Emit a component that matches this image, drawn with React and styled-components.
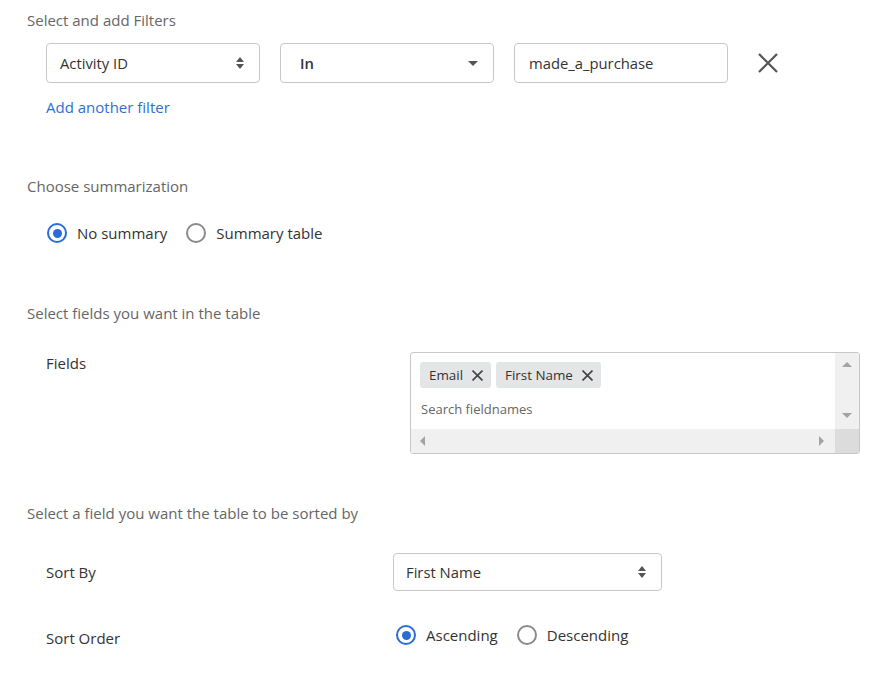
import React from "react";
import styled, { createGlobalStyle } from "styled-components";

const Global = createGlobalStyle`
  html, body { margin: 0; padding: 0; background: #fff; }
  body { font-family: "Open Sans", "Noto Sans", sans-serif; color: #333; }
  * { box-sizing: border-box; }
`;

const Page = styled.div`
  width: 876px;
  height: 673px;
  padding: 10px 0 0 27px;
  overflow: hidden;
`;

const Heading = styled.div`
  font-size: 15px;
  line-height: 20px;
  color: #666;
  margin-top: ${(p) => p.$mt || 0}px;
`;

const Indent = styled.div`
  padding-left: 19px;
  margin-top: ${(p) => p.$mt || 0}px;
`;

const FilterRow = styled.div`
  display: flex;
  align-items: center;
  gap: 20px;
`;

const Box = styled.div`
  width: ${(p) => p.$w || 214}px;
  height: ${(p) => p.$h || 40}px;
  border: 1px solid #c8c8c8;
  border-radius: 4px;
  display: flex;
  align-items: center;
  padding-left: ${(p) => p.$pl || 14}px;
  padding-right: 15px;
  font-size: 14.8px;
  font-weight: ${(p) => (p.$bold ? 600 : 400)};
  color: #333;
  background: #fff;
`;

const BoxText = styled.span`
  flex: 1;
`;

const CloseButton = styled.button`
  border: 0;
  background: none;
  padding: 0;
  margin-left: 9px;
  width: 22px;
  height: 22px;
  display: flex;
  align-items: center;
  justify-content: center;
  cursor: pointer;
`;

const Link = styled.a`
  display: block;
  color: #2f6fd3;
  font-size: 15px;
  line-height: 20px;
  text-decoration: none;
  margin-top: 14px;
`;

const RadioGroup = styled.div`
  display: flex;
  align-items: center;
  height: 20px;
  margin-left: ${(p) => p.$ml || 0}px;
`;

const RadioItem = styled.label`
  display: flex;
  align-items: center;
  font-size: 15px;
  color: #333;
  margin-right: 18px;
`;

const RadioCircle = styled.span`
  width: 20px;
  height: 20px;
  border-radius: 50%;
  border: 2px solid ${(p) => (p.$checked ? "#2b6cd4" : "#8a8a8a")};
  display: flex;
  align-items: center;
  justify-content: center;
  margin: 0 10px 0 1px;
  &::after {
    content: "";
    width: 9px;
    height: 9px;
    border-radius: 50%;
    background: ${(p) => (p.$checked ? "#2b6cd4" : "transparent")};
  }
`;

const FieldRow = styled.div`
  display: flex;
  align-items: ${(p) => p.$align || "flex-start"};
  margin-top: ${(p) => p.$mt || 0}px;
`;

const Label = styled.div`
  width: ${(p) => p.$w}px;
  font-size: 15px;
  line-height: 20px;
  color: #333;
  padding-top: ${(p) => p.$pt || 0}px;
  flex-shrink: 0;
`;

const MultiBox = styled.div`
  width: 450px;
  height: 102px;
  border: 1px solid #c8c8c8;
  border-radius: 3px;
  display: grid;
  grid-template-columns: 1fr 24px;
  grid-template-rows: 1fr 24px;
  overflow: hidden;
`;

const MultiContent = styled.div`
  padding: 9px 0 0 9px;
`;

const Tags = styled.div`
  display: flex;
  gap: 5px;
`;

const Tag = styled.span`
  display: inline-flex;
  align-items: center;
  height: 26px;
  padding: 0 8px 0 9px;
  background: #e4e5e7;
  border-radius: 3px;
  font-size: 13.4px;
  color: #333;
  gap: 9px;
`;

const Search = styled.div`
  font-size: 13px;
  color: #666;
  margin-top: 12px;
  padding-left: 1px;
`;

const VScroll = styled.div`
  background: #f0f0f0;
  display: flex;
  flex-direction: column;
  justify-content: space-between;
  align-items: center;
  padding: 9px 0 11px;
`;

const HScroll = styled.div`
  background: #f0f0f0;
  display: flex;
  justify-content: space-between;
  align-items: center;
  padding: 0 11px 0 9px;
`;

const Corner = styled.div`
  background: #dcdcdc;
`;

const Tri = ({ dir }) => {
  const pts = {
    up: "0,5 5,0 10,5",
    down: "0,0 10,0 5,5",
    left: "5,0 5,10 0,5",
    right: "0,0 5,5 0,10",
  }[dir];
  const w = dir === "up" || dir === "down" ? 10 : 5;
  const h = dir === "up" || dir === "down" ? 5 : 10;
  return (
    <svg width={w} height={h} viewBox={`0 0 ${w} ${h}`}>
      <polygon points={pts} fill="#a3a3a3" />
    </svg>
  );
};

const UpDown = () => (
  <svg width="8" height="12" viewBox="0 0 8 12">
    <polygon points="0,5 4,0 8,5" fill="#555" />
    <polygon points="0,7 8,7 4,12" fill="#555" />
  </svg>
);

const Caret = () => (
  <svg width="10" height="5" viewBox="0 0 10 5">
    <polygon points="0,0 10,0 5,5" fill="#555" />
  </svg>
);

const XIcon = ({ size = 20, sw = 2, color = "#555" }) => (
  <svg width={size} height={size} viewBox="0 0 20 20">
    <path d="M1 1 L19 19 M19 1 L1 19" stroke={color} strokeWidth={sw} fill="none" />
  </svg>
);

const Radio = ({ checked, children }) => (
  <RadioItem>
    <RadioCircle $checked={checked} />
    {children}
  </RadioItem>
);

export default function App() {
  return (
    <>
      <Global />
      <Page>
        <Heading>Select and add Filters</Heading>
        <Indent $mt={13}>
          <FilterRow>
            <Box $pl={13}>
              <BoxText>Activity ID</BoxText>
              <UpDown />
            </Box>
            <Box $pl={19} $bold>
              <BoxText>In</BoxText>
              <Caret />
            </Box>
            <Box $pl={14}>
              <BoxText>made_a_purchase</BoxText>
            </Box>
            <CloseButton aria-label="remove">
              <XIcon size={20} sw={2.2} />
            </CloseButton>
          </FilterRow>
          <Link href="#">Add another filter</Link>
        </Indent>

        <Heading $mt={59}>Choose summarization</Heading>
        <Indent $mt={27}>
          <RadioGroup>
            <Radio checked>No summary</Radio>
            <Radio>Summary table</Radio>
          </RadioGroup>
        </Indent>

        <Heading $mt={60}>Select fields you want in the table</Heading>
        <Indent $mt={29}>
          <FieldRow>
            <Label $w={364} $pt={1}>Fields</Label>
            <MultiBox>
              <MultiContent>
                <Tags>
                  <Tag>
                    Email
                    <XIcon size={11} sw={3} color="#444" />
                  </Tag>
                  <Tag>
                    First Name
                    <XIcon size={11} sw={3} color="#444" />
                  </Tag>
                </Tags>
                <Search>Search fieldnames</Search>
              </MultiContent>
              <VScroll>
                <Tri dir="up" />
                <Tri dir="down" />
              </VScroll>
              <HScroll>
                <Tri dir="left" />
                <Tri dir="right" />
              </HScroll>
              <Corner />
            </MultiBox>
          </FieldRow>
        </Indent>

        <Heading $mt={49}>Select a field you want the table to be sorted by</Heading>
        <Indent $mt={30}>
          <FieldRow $align="center">
            <Label $w={347}>Sort By</Label>
            <Box $w={269} $h={38} $pl={12}>
              <BoxText>First Name</BoxText>
              <UpDown />
            </Box>
          </FieldRow>
          <FieldRow $mt={34}>
            <Label $w={347} $pt={3}>Sort Order</Label>
            <RadioGroup $ml={2}>
              <Radio checked>Ascending</Radio>
              <Radio>Descending</Radio>
            </RadioGroup>
          </FieldRow>
        </Indent>
      </Page>
    </>
  );
}
